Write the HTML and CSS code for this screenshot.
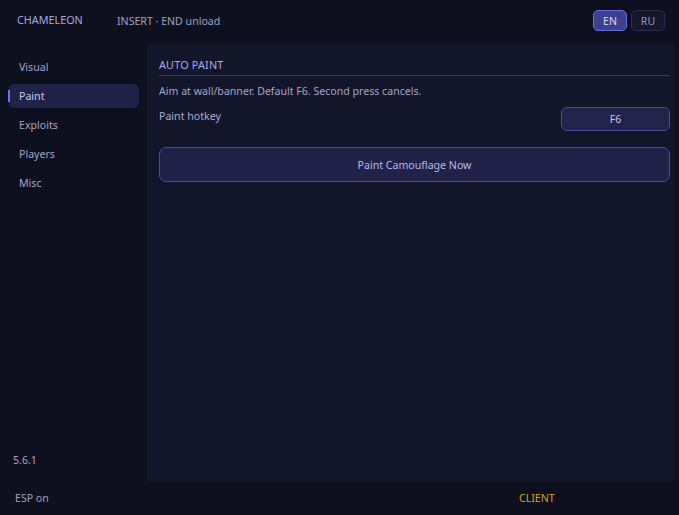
FILE: index.html
```html
<!DOCTYPE html>
<html lang="en">
<head>
    <meta charset="UTF-8">
    <title>Chameleon</title>
    <link rel="stylesheet" href="styles.css">
</head>
<body>
    <div class="app">
        <header class="topbar">
            <span class="brand">CHAMELEON</span>
            <span class="hint">INSERT · END unload</span>
            <div class="lang">
                <button class="lang-btn active">EN</button>
                <button class="lang-btn">RU</button>
            </div>
        </header>

        <div class="main">
            <nav class="sidebar">
                <ul class="nav">
                    <li class="nav-item">Visual</li>
                    <li class="nav-item active">Paint</li>
                    <li class="nav-item">Exploits</li>
                    <li class="nav-item">Players</li>
                    <li class="nav-item">Misc</li>
                </ul>
                <div class="version">5.6.1</div>
            </nav>

            <section class="panel">
                <h2 class="section-title">AUTO PAINT</h2>
                <p class="desc">Aim at wall/banner. Default F6. Second press cancels.</p>
                <div class="row">
                    <span class="row-label">Paint hotkey</span>
                    <button class="key-btn">F6</button>
                </div>
                <button class="action-btn">Paint Camouflage Now</button>
            </section>
        </div>

        <footer class="statusbar">
            <span class="status">ESP on</span>
            <span class="mode">CLIENT</span>
        </footer>
    </div>
</body>
</html>
```

FILE: styles.css
```css
html, body {
    margin: 0;
    height: 100%;
}
body {
    font-family: 'Noto Sans', sans-serif;
    font-size: 10.6px;
    line-height: 14px;
    color: #a9adcf;
    background-color: #0e0f1f;
}
.app {
    display: flex;
    flex-direction: column;
    height: 515px;
}
.topbar {
    height: 43px;
    display: flex;
    align-items: center;
    padding: 0 14px 0 17px;
    box-sizing: border-box;
}
.brand {
    color: #a4a9e6;
    font-size: 10.8px;
    width: 100px;
    margin-top: -4px;
}
.hint {
    color: #9ea2c4;
    margin-top: -1px;
}
.lang {
    margin-left: auto;
    display: flex;
    gap: 4px;
    margin-top: -2px;
}
.lang-btn {
    font-family: inherit;
    font-size: 10.6px;
    width: 34px;
    height: 21px;
    border-radius: 5px;
    border: 1px solid #2c2d4c;
    background-color: #16172b;
    color: #9397c0;
    padding: 0;
}
.lang-btn.active {
    background-color: #3d3f8f;
    border-color: #6b70e0;
    color: #d6d8ff;
}
.main {
    flex: 1;
    display: flex;
}
.sidebar {
    width: 147px;
    display: flex;
    flex-direction: column;
    padding: 12px 8px 14px 8px;
    box-sizing: border-box;
}
.nav {
    list-style: none;
    margin: 0;
    padding: 0;
    display: flex;
    flex-direction: column;
    gap: 5px;
}
.nav-item {
    height: 24px;
    line-height: 24px;
    padding-left: 11px;
    border-radius: 6px;
    color: #a3a7c8;
    position: relative;
}
.nav-item.active {
    background-color: #212248;
    color: #c8cbf2;
}
.nav-item.active::before {
    content: '';
    position: absolute;
    left: 0;
    top: 6px;
    width: 2px;
    height: 12px;
    background-color: #6f74ea;
}
.version {
    margin-top: auto;
    padding-left: 5px;
    color: #a3a7c8;
}
.panel {
    flex: 1;
    margin-right: 5px;
    background-color: #13152a;
    padding: 15px 4px 0 12px;
}
.section-title {
    margin: 0;
    font-size: 10.8px;
    letter-spacing: 0.2px;
    font-weight: normal;
    color: #a7abf0;
    padding-bottom: 3px;
    border-bottom: 1px solid #38397a;
}
.desc {
    margin: 8px 0 0;
    color: #a3a7c8;
}
.row {
    display: flex;
    justify-content: space-between;
    align-items: flex-start;
    margin-top: 9px;
}
.row-label {
    padding-top: 2px;
}
.key-btn {
    font-family: inherit;
    font-size: 10.6px;
    width: 109px;
    height: 24px;
    border-radius: 6px;
    border: 1px solid #4a4c9c;
    background-color: #222349;
    color: #c6c9ee;
    padding: 0;
}
.action-btn {
    display: block;
    width: 100%;
    height: 35px;
    margin-top: 16px;
    font-family: inherit;
    font-size: 10.6px;
    border-radius: 7px;
    border: 1px solid #4a4c9c;
    background-color: #212248;
    color: #b8bbe6;
}
.statusbar {
    height: 34px;
    display: flex;
    align-items: center;
    padding: 0 15px;
}
.status {
    color: #9ea2c8;
    width: 504px;
}
.mode {
    color: #d6a324;
}
```
